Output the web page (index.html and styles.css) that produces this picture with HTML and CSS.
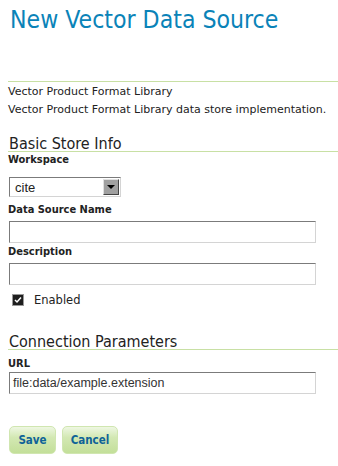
FILE: index.html
```html
<!DOCTYPE html>
<html lang="en">
<head>
    <meta charset="UTF-8">
    <title>New Vector Data Source</title>
    <link rel="stylesheet" href="styles.css">
</head>
<body>
    <div class="page">
        <h1 class="title">New Vector Data Source</h1>

        <div class="store-type">
            <p>Vector Product Format Library</p>
            <p>Vector Product Format Library data store implementation.</p>
        </div>

        <h2 class="section">Basic Store Info</h2>
        <div class="field field-first">
            <label class="label">Workspace</label>
            <div class="select">
                <span class="select-value">cite</span>
                <span class="select-btn"><span class="arrow"></span></span>
            </div>
        </div>
        <div class="field">
            <label class="label">Data Source Name</label>
            <div class="input"></div>
        </div>
        <div class="field">
            <label class="label">Description</label>
            <div class="input"></div>
        </div>
        <div class="check">
            <span class="box">
                <svg width="8" height="8" viewBox="0 0 8 8"><path d="M1 4 L3 6 L7 1.5" fill="none" stroke="#fff" stroke-width="1.5"/></svg>
            </span>
            <span>Enabled</span>
        </div>

        <h2 class="section section-conn">Connection Parameters</h2>
        <div class="field field-url">
            <label class="label">URL</label>
            <div class="input">file:data/example.extension</div>
        </div>

        <div class="buttons">
            <button class="btn btn-save">Save</button>
            <button class="btn btn-cancel">Cancel</button>
        </div>
    </div>
</body>
</html>
```

FILE: styles.css
```css
* {
    margin: 0;
    padding: 0;
    box-sizing: border-box;
}

body {
    font-family: 'DejaVu Sans', Verdana, sans-serif;
    font-size: 11px;
    color: #222;
    background: #fff;
}

.page {
    padding-left: 8px;
}

.title {
    font-family: 'DejaVu Sans Condensed', 'DejaVu Sans', sans-serif;
    font-weight: normal;
    font-size: 24.6px;
    line-height: 30px;
    color: #0a83b8;
    height: 81px;
    padding: 5px 0 0 2px;
}

.store-type {
    border-top: 1px solid #c8e0a4;
    padding-top: 1px;
}

.store-type p {
    line-height: 18px;
}

.section {
    font-family: 'DejaVu Sans Condensed', 'DejaVu Sans', sans-serif;
    font-weight: normal;
    font-size: 16px;
    line-height: 14px;
    color: #222;
    margin-top: 18px;
    padding-left: 1px;
    border-bottom: 1px solid #c8e0a4;
}

.section-conn {
    margin-top: 28px;
}

.field {
    margin-top: 2px;
}

.field-first {
    margin-top: 1px;
}

.label {
    display: block;
    font-family: 'DejaVu Sans Condensed', 'DejaVu Sans', sans-serif;
    font-weight: bold;
    font-size: 11px;
    line-height: 14px;
    margin-bottom: 4px;
}

.field-first .label {
    margin-bottom: 10px;
}

.field-first + .field {
    margin-top: 6px;
}

.field-url {
    margin-top: 7px;
}

.field-url .label {
    margin-bottom: 1px;
}

.select {
    display: flex;
    width: 112px;
    height: 20px;
    margin-left: 1px;
    border: 1px solid #7b7b7b;
    border-right-color: #d4d4d4;
    border-bottom-color: #d4d4d4;
    background: #fff;
}

.select-value {
    flex: 1;
    padding: 2px 0 0 5px;
    font-family: 'Liberation Sans', Arial, sans-serif;
    font-size: 13px;
    line-height: 15px;
}

.select-btn {
    width: 16px;
    margin: 1px;
    border: 1px solid #444;
    border-top-color: #e0e0e0;
    border-left-color: #e0e0e0;
    background: #a0a0a0;
    display: flex;
    align-items: center;
    justify-content: center;
}

.arrow {
    width: 0;
    height: 0;
    border-left: 4px solid transparent;
    border-right: 4px solid transparent;
    border-top: 4px solid #000;
}

.input {
    width: 307px;
    height: 22px;
    margin-left: 1px;
    border: 1px solid #7b7b7b;
    border-right-color: #d4d4d4;
    border-bottom-color: #d4d4d4;
    padding: 3px 0 0 3px;
    font-family: 'Liberation Sans', Arial, sans-serif;
    font-size: 12.5px;
    line-height: 15px;
    color: #333;
}

.check {
    display: flex;
    align-items: center;
    gap: 10px;
    margin: 8px 0 0 4px;
    font-size: 11.5px;
}

.box {
    width: 12px;
    height: 12px;
    background: #1e1e1e;
    border: 1px solid #999;
    display: flex;
    align-items: center;
    justify-content: center;
}

.buttons {
    display: flex;
    gap: 6px;
    margin-top: 32px;
    margin-left: 1px;
}

.btn {
    font-family: 'DejaVu Sans Condensed', 'DejaVu Sans', sans-serif;
    font-size: 11.5px;
    font-weight: bold;
    color: #0f6398;
    height: 28px;
    padding: 0;
    border: 1px solid #d0e6b0;
    border-radius: 5px;
    background: linear-gradient(to bottom, #eef7e2 0%, #d3e8b3 40%, #c3df99 100%);
}

.btn-save {
    width: 47px;
}

.btn-cancel {
    width: 56px;
}
```
